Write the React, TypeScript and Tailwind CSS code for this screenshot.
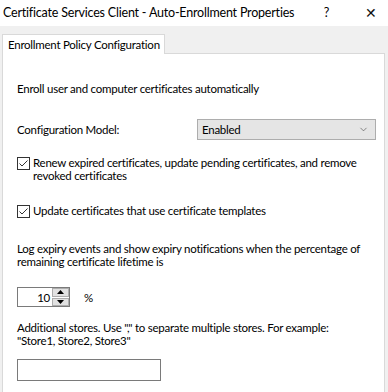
import { ChevronDown } from "lucide-react";

const font = { fontFamily: "Lato, 'Noto Sans', sans-serif" };

const CheckBox = () => (
  <span className="mt-px flex h-[13px] w-[13px] shrink-0 items-center justify-center border border-[#333333] bg-white">
    <svg width="11" height="11" viewBox="0 0 11 11">
      <path d="M1.5 5.5 L4 8 L9.5 2.5" fill="none" stroke="#333333" strokeWidth="1" />
    </svg>
  </span>
);

const SpinArrow = ({ up }: { up?: boolean }) => (
  <span className="flex h-[9px] w-[17px] items-center justify-center border border-[#adadad] bg-[#e1e1e1]">
    <svg width="7" height="4" viewBox="0 0 7 4">
      <path d={up ? "M0 4 L3.5 0 L7 4 Z" : "M0 0 L3.5 4 L7 0 Z"} fill="#000" />
    </svg>
  </span>
);

export default function App() {
  return (
    <div
      className="h-[392px] w-[388px] overflow-hidden bg-[#f0f0f0] text-[11.5px] tracking-[-0.25px] text-black"
      style={font}
    >
      {/* title bar */}
      <div className="flex h-[26px] items-center bg-white pl-[3px] pr-[11px] text-[12.5px] tracking-[-0.2px]">
        <span className="whitespace-nowrap">Certificate Services Client - Auto-Enrollment Properties</span>
        <span className="ml-auto">?</span>
        <span className="ml-[36px] font-['DejaVu_Sans'] text-[14px] font-extralight leading-none text-[#111]">✕</span>
      </div>

      <div className="px-[2px] pt-[8px]">
        <div className="relative z-10 -mb-px flex h-[20px] w-[163px] items-center whitespace-nowrap border border-b-0 border-[#d9d9d9] bg-white pl-[5px]">
          Enrollment Policy Configuration
        </div>
        <div className="h-[400px] w-[383px] border border-[#d9d9d9] bg-white px-[14px] pt-[28px] leading-[13px]">
          <p>Enroll user and computer certificates automatically</p>

          <div className="mt-[24px] flex h-[21px] items-center">
            <span className="w-[180px] shrink-0">Configuration Model:</span>
            <div className="flex h-[21px] w-[179px] shrink-0 items-center border border-[#adadad] bg-[#e5e5e5] pl-[4px] pr-[6px]">
              <span>Enabled</span>
              <ChevronDown size={11} strokeWidth={1.2} className="ml-auto text-[#333]" />
            </div>
          </div>

          <div className="mt-[16px] flex gap-[3px]">
            <CheckBox />
            <span>Renew expired certificates, update pending certificates, and remove revoked certificates</span>
          </div>

          <div className="mt-[22px] flex gap-[3px]">
            <CheckBox />
            <span>Update certificates that use certificate templates</span>
          </div>

          <p className="mt-[24px]">
            Log expiry events and show expiry notifications when the percentage of remaining certificate lifetime is
          </p>

          <div className="mt-[19px] flex items-center">
            <div className="flex h-[20px] w-[53px] border border-[#7a7a7a]">
              <span className="flex flex-1 items-center justify-end pr-[2px]">10</span>
              <div className="flex flex-col justify-center gap-px bg-white">
                <SpinArrow up />
                <SpinArrow />
              </div>
            </div>
            <span className="ml-[14px]">%</span>
          </div>

          <p className="mt-[14px] max-w-[325px]">
            Additional stores. Use "," to separate multiple stores. For example: "Store1, Store2, Store3"
          </p>

          <div className="mt-[12px] h-[22px] w-[144px] border border-[#7a7a7a] bg-white" />
        </div>
      </div>
    </div>
  );
}
